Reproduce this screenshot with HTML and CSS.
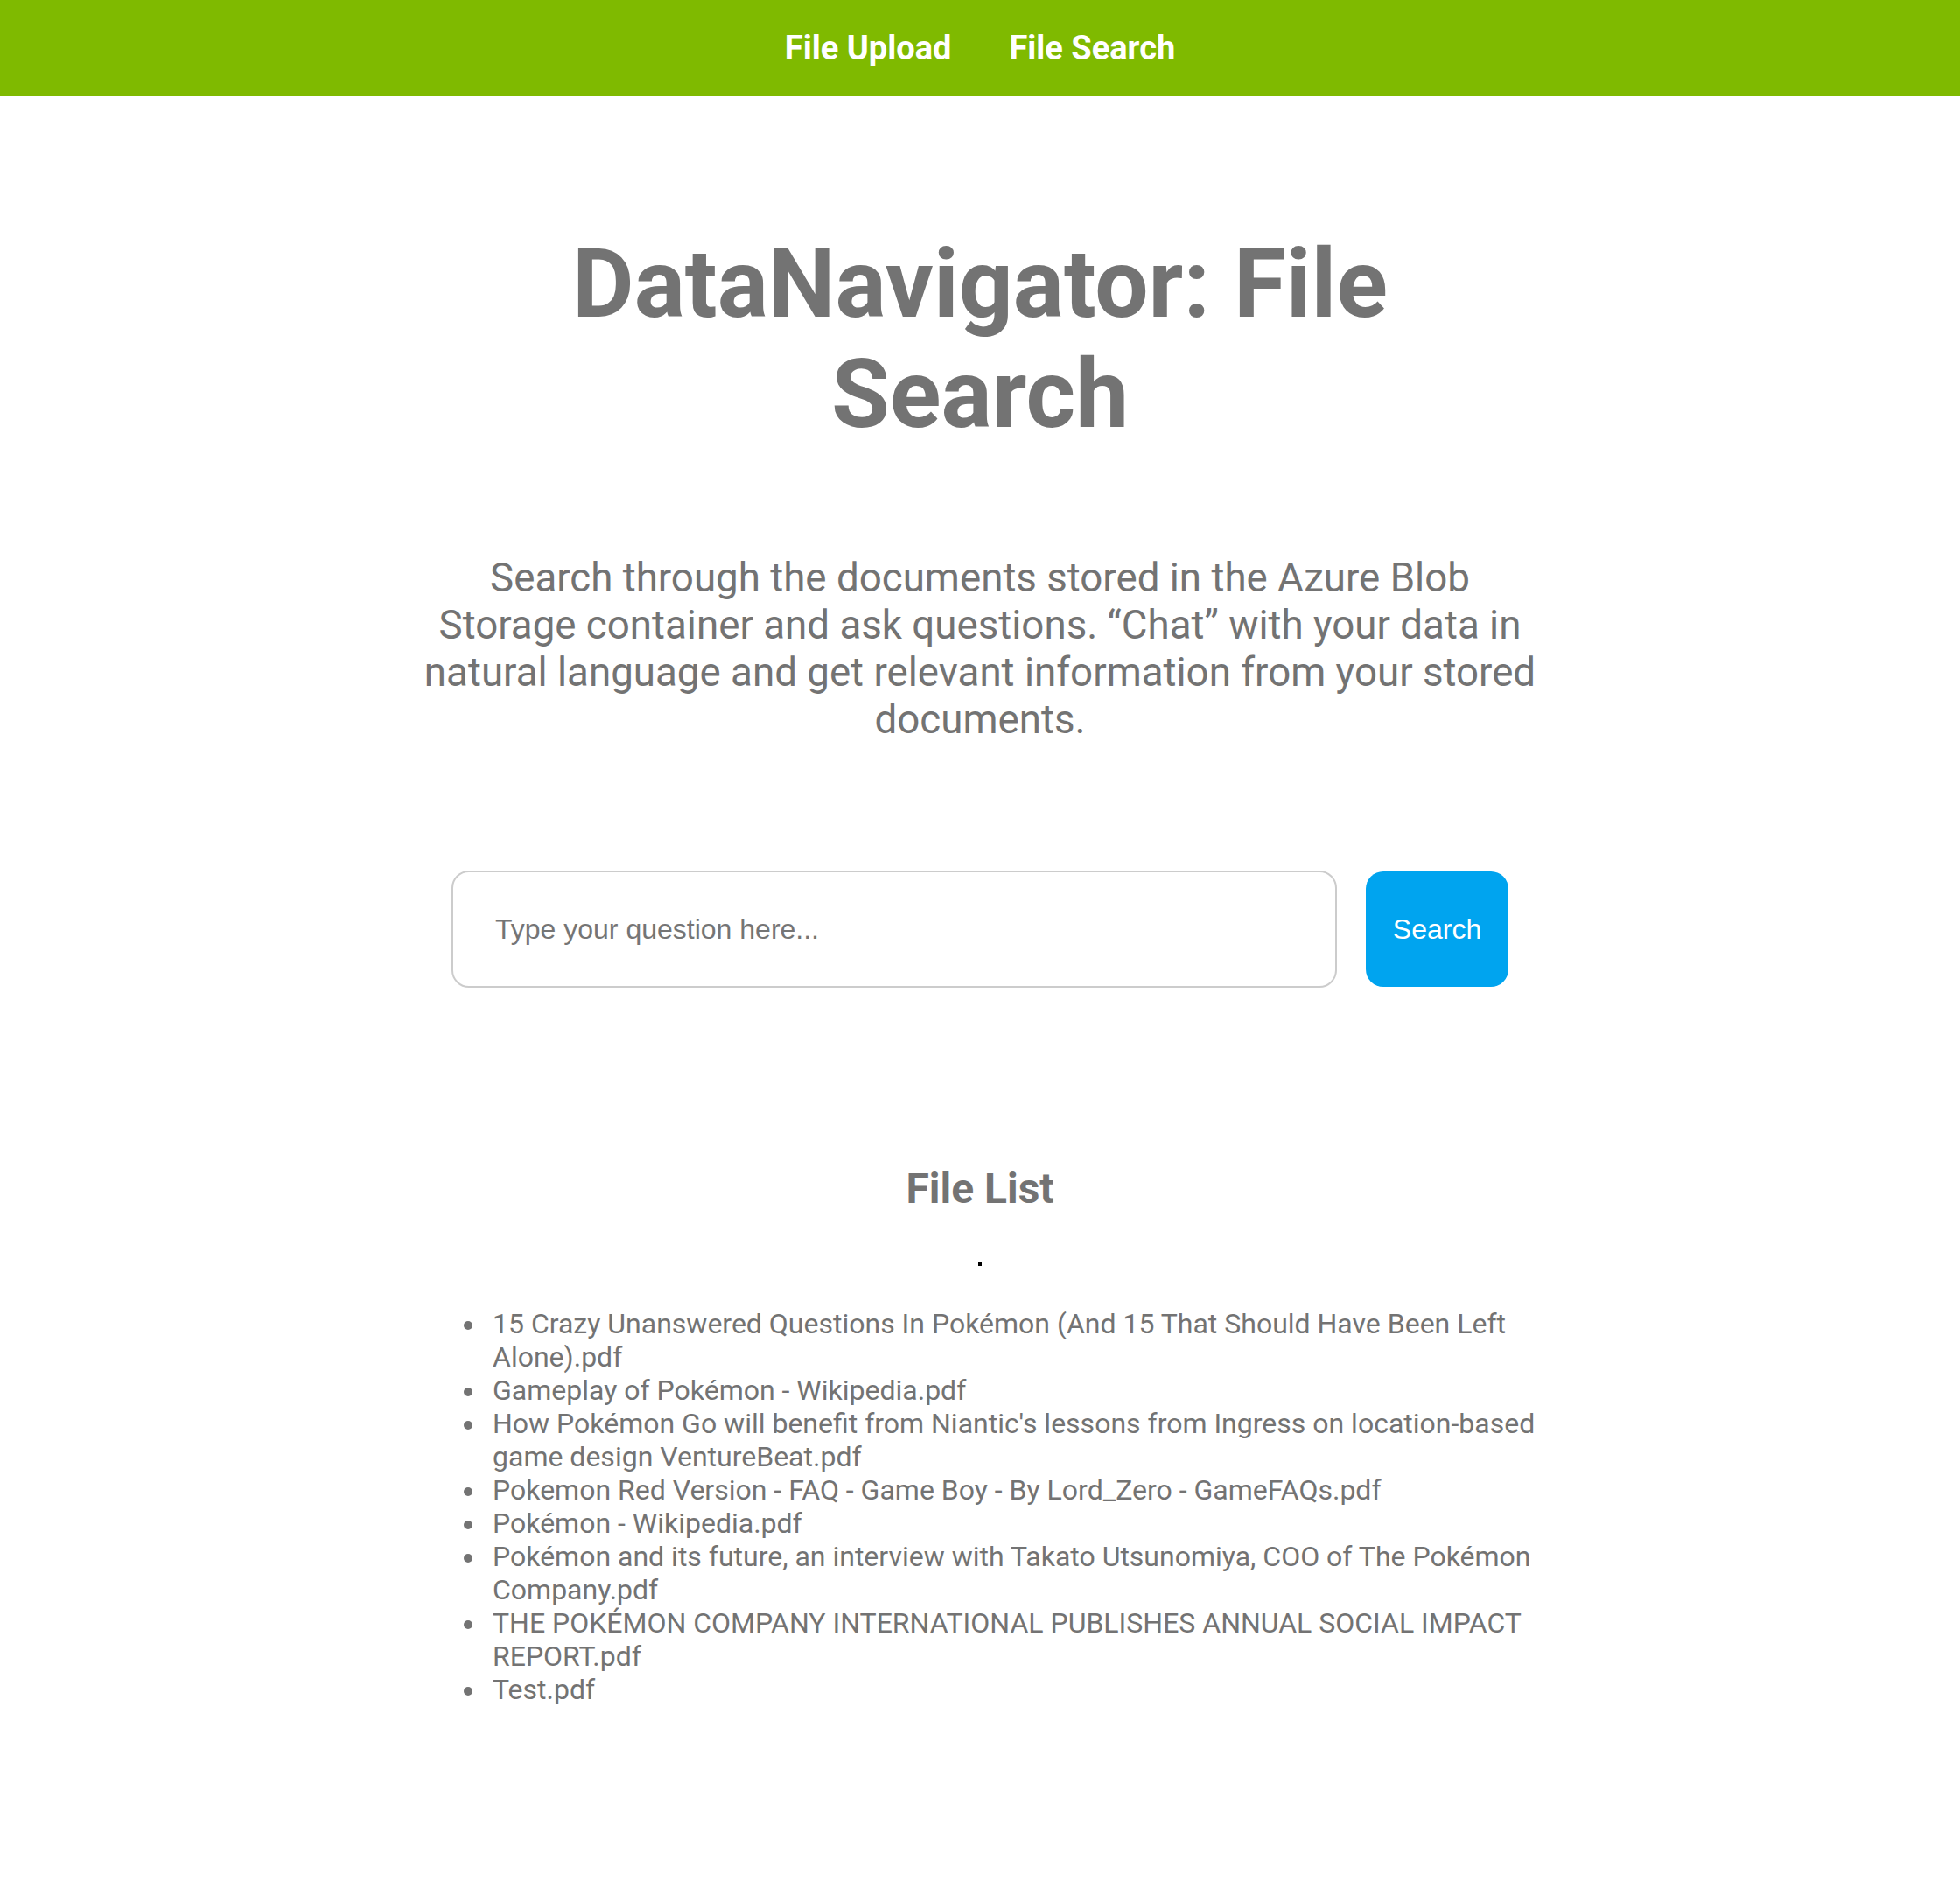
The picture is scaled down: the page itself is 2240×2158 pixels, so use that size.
FILE: index.html
```html
<!DOCTYPE html>
<html lang="en">
<head>
<meta charset="utf-8">
<title>DataNavigator: File Search</title>
<link rel="stylesheet" href="styles.css">
</head>
<body>
<nav class="topnav">
  <a class="nav-link" href="#">File Upload</a>
  <a class="nav-link" href="#">File Search</a>
</nav>
<main class="container">
  <h1 class="title">DataNavigator: File Search</h1>
  <p class="intro">Search through the documents stored in the Azure Blob Storage container and ask questions. “Chat” with your data in natural language and get relevant information from your stored documents.</p>
  <form class="search-form">
    <input class="search-input" type="text" placeholder="Type your question here...">
    <button class="search-button" type="button">Search</button>
  </form>
  <section class="file-section">
    <h2 class="file-title">File List</h2>
    <div class="dot"></div>
    <ul class="file-list">
      <li>15 Crazy Unanswered Questions In Pokémon (And 15 That Should Have Been Left Alone).pdf</li>
      <li>Gameplay of Pokémon - Wikipedia.pdf</li>
      <li>How Pokémon Go will benefit from Niantic's lessons from Ingress on location-based game design VentureBeat.pdf</li>
      <li>Pokemon Red Version - FAQ - Game Boy - By Lord_Zero - GameFAQs.pdf</li>
      <li>Pokémon - Wikipedia.pdf</li>
      <li>Pokémon and its future, an interview with Takato Utsunomiya, COO of The Pokémon Company.pdf</li>
      <li>THE POKÉMON COMPANY INTERNATIONAL PUBLISHES ANNUAL SOCIAL IMPACT REPORT.pdf</li>
      <li>Test.pdf</li>
    </ul>
  </section>
</main>
</body>
</html>
```

FILE: styles.css
```css
html, body {
  margin: 0;
  padding: 0;
  background: #ffffff;
}

body {
  font-family: Roboto, "Liberation Sans", Arial, sans-serif;
  color: #737373;
}

.topnav {
  height: 110px;
  background: #7fba00;
  display: flex;
  justify-content: center;
  align-items: center;
  gap: 66px;
}

.nav-link {
  color: #ffffff;
  font-family: Roboto, sans-serif;
  font-weight: 700;
  font-size: 38px;
  text-decoration: none;
}

.container {
  width: 1280px;
  margin: 0 auto;
  text-align: center;
}

.title {
  margin: 152px 0 0;
  font-size: 108.7px;
  font-weight: 700;
  line-height: 126px;
  color: #737373;
}

.intro {
  margin: 120px 0 0;
  font-size: 45.7px;
  font-weight: 400;
  line-height: 54px;
}

.search-form {
  margin: 145px 36px 0;
  display: flex;
  align-items: center;
  gap: 33px;
}

.search-input {
  flex: 1;
  box-sizing: border-box;
  height: 134px;
  border: 2px solid #cccccc;
  border-radius: 20px;
  padding: 0 48px;
  font-family: "Liberation Sans", Arial, sans-serif;
  font-size: 32px;
  color: #333333;
  outline: none;
}

.search-input::placeholder {
  color: #757575;
}

.search-button {
  box-sizing: border-box;
  width: 163px;
  height: 132px;
  border: none;
  border-radius: 20px;
  background: #00a4ef;
  color: #ffffff;
  font-family: "Liberation Sans", Arial, sans-serif;
  font-size: 32px;
  padding: 0;
}

.file-section {
  margin-top: 201px;
}

.file-title {
  margin: 0;
  font-size: 48px;
  font-weight: 700;
  line-height: normal;
}

.dot {
  width: 4px;
  height: 4px;
  background: #000000;
  margin: 56px auto 0;
}

.file-list {
  margin: 47px 0 0;
  padding-left: 83px;
  text-align: left;
  font-size: 32px;
  line-height: normal;
  list-style: none;
}

.file-list li {
  position: relative;
}

.file-list li::before {
  content: "";
  position: absolute;
  left: -33px;
  top: 16px;
  width: 10px;
  height: 10px;
  border-radius: 50%;
  background: #737373;
}
```
